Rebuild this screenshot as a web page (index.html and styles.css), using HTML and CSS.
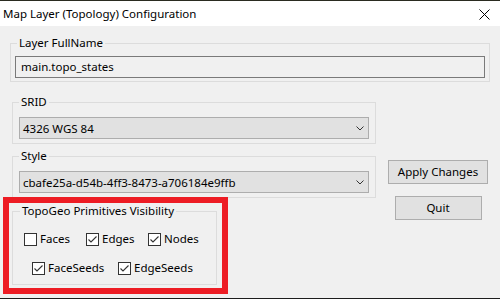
FILE: index.html
```html
<!DOCTYPE html>
<html lang="en">
<head>
    <meta charset="UTF-8">
    <meta name="viewport" content="width=device-width, initial-scale=1.0">
    <title>Map Layer (Topology) Configuration</title>
    <link rel="stylesheet" href="styles.css">
</head>
<body>
    <div class="window">
        <div class="frame-top"></div>
        <header class="titlebar">
            <span class="title">Map Layer (Topology) Configuration</span>
            <svg class="close" width="11" height="11" viewBox="0 0 11 11">
                <path d="M0.5 0.5 L10.5 10.5 M10.5 0.5 L0.5 10.5" stroke="#000" stroke-width="1" fill="none"/>
            </svg>
        </header>

        <main class="content">
            <fieldset class="group group-name">
                <legend>Layer FullName</legend>
                <div class="textbox">main.topo_states</div>
            </fieldset>

            <div class="split">
                <div class="left">
                    <fieldset class="group group-combo">
                        <legend>SRID</legend>
                        <div class="combo">
                            <span>4326 WGS 84</span>
                            <svg class="chevron" width="8" height="5" viewBox="0 0 8 5">
                                <path d="M0.5 0.5 L4 4 L7.5 0.5" stroke="#333" stroke-width="1" fill="none"/>
                            </svg>
                        </div>
                    </fieldset>

                    <fieldset class="group group-combo group-style">
                        <legend>Style</legend>
                        <div class="combo">
                            <span>cbafe25a-d54b-4ff3-8473-a706184e9ffb</span>
                            <svg class="chevron" width="8" height="5" viewBox="0 0 8 5">
                                <path d="M0.5 0.5 L4 4 L7.5 0.5" stroke="#333" stroke-width="1" fill="none"/>
                            </svg>
                        </div>
                    </fieldset>

                    <div class="highlight">
                        <fieldset class="group group-topo">
                            <legend>TopoGeo Primitives Visibility</legend>
                            <div class="check-row">
                                <label class="check"><span class="box"></span>Faces</label>
                                <label class="check"><span class="box"><svg width="11" height="11" viewBox="0 0 11 11"><path d="M1.5 5.5 L4 8 L9.5 2.5" stroke="#333" stroke-width="1.1" fill="none"/></svg></span>Edges</label>
                                <label class="check"><span class="box"><svg width="11" height="11" viewBox="0 0 11 11"><path d="M1.5 5.5 L4 8 L9.5 2.5" stroke="#333" stroke-width="1.1" fill="none"/></svg></span>Nodes</label>
                            </div>
                            <div class="check-row check-row-second">
                                <label class="check"><span class="box"><svg width="11" height="11" viewBox="0 0 11 11"><path d="M1.5 5.5 L4 8 L9.5 2.5" stroke="#333" stroke-width="1.1" fill="none"/></svg></span>FaceSeeds</label>
                                <label class="check"><span class="box"><svg width="11" height="11" viewBox="0 0 11 11"><path d="M1.5 5.5 L4 8 L9.5 2.5" stroke="#333" stroke-width="1.1" fill="none"/></svg></span>EdgeSeeds</label>
                            </div>
                        </fieldset>
                    </div>
                </div>

                <div class="actions">
                    <button class="btn btn-apply">Apply Changes</button>
                    <button class="btn btn-quit">Quit</button>
                </div>
            </div>
        </main>
        <div class="frame-bottom"></div>
    </div>
</body>
</html>
```

FILE: styles.css
```css
* {
    box-sizing: border-box;
}
body {
    margin: 0;
    font-family: "Noto Sans", "Liberation Sans", sans-serif;
    font-size: 11.5px;
    color: #000;
    background: #f0f0f0;
}
.window {
    width: 500px;
    height: 299px;
    display: flex;
    flex-direction: column;
    background: #f0f0f0;
    overflow: hidden;
}
.frame-top {
    height: 1px;
    background: #2a2b20;
}
.frame-bottom {
    height: 1px;
    background: #1c1c1c;
}
.titlebar {
    height: 25px;
    background: #fff;
    display: flex;
    align-items: center;
    justify-content: space-between;
    padding: 0 10px 0 3px;
}
.title {
    line-height: 16px;
    padding-top: 1px;
}
.close {
    display: block;
    margin-top: 1px;
}
.content {
    flex: 1;
}
.group {
    margin: 0;
    min-width: 0;
    border: 1px solid #dcdcdc;
}
.group legend {
    padding: 0 2px;
    line-height: 16px;
}
.group-name {
    margin: 9px 0 0 10px;
    width: 480px;
    padding: 5px 4px 3px 4px;
}
.group-name legend {
    margin-left: 2px;
}
.textbox {
    height: 22px;
    border: 1px solid #7a7a7a;
    background: #f0f0f0;
    padding-left: 5px;
    line-height: 19px;
}
.split {
    display: flex;
}
.left {
    width: 376px;
}
.group-combo {
    margin: 12px 0 0 12px;
    width: 364px;
    padding: 7px 6px 4px 6px;
}
.group-style {
    margin-top: 4px;
}
.combo {
    height: 22px;
    border: 1px solid #adadad;
    background: #e1e1e1;
    display: flex;
    align-items: center;
    justify-content: space-between;
    padding: 0 4px 0 3px;
}
.chevron {
    display: block;
    margin-top: 1px;
}
.highlight {
    margin: -1px 0 0 3px;
    width: 225px;
    border: 6px solid #ed1c24;
    padding: 0 5px 3px 3px;
}
.group-topo {
    width: 205px;
    padding: 12px 0 8px 6px;
}
.group-topo legend {
    margin-left: 1px;
}
.check-row {
    display: flex;
    padding-left: 5px;
}
.check-row-second {
    margin-top: 13px;
    padding-left: 13px;
}
.check {
    display: flex;
    align-items: center;
    width: 62px;
    line-height: 16px;
}
.check-row-second .check {
    width: 86px;
}
.box {
    width: 13px;
    height: 13px;
    border: 1px solid #333;
    background: #fff;
    margin-right: 3px;
    flex-shrink: 0;
}
.box svg {
    display: block;
}
.actions {
    flex: 1;
    display: flex;
    flex-direction: column;
    align-items: center;
}
.btn {
    font: inherit;
    color: #000;
    background: #e1e1e1;
    border: 1px solid #adadad;
    border-radius: 0;
    padding: 0;
    height: 24px;
    line-height: 20px;
}
.btn-apply {
    margin-top: 78px;
    width: 100px;
}
.btn-quit {
    margin-top: 12px;
    width: 87px;
}
```
